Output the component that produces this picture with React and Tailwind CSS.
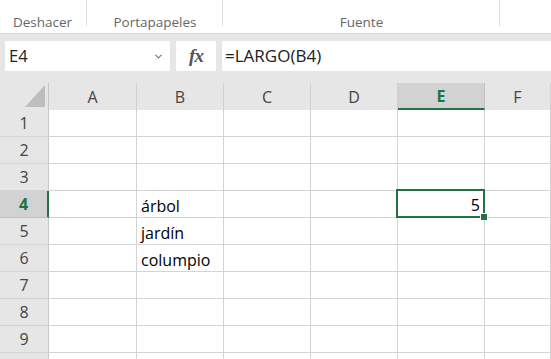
import { ChevronDown } from "lucide-react";

const cols = ["A", "B", "C", "D", "E", "F"];
const rows = [1, 2, 3, 4, 5, 6, 7, 8, 9, 10];

const data = {
  "B4": "árbol",
  "B5": "jardín",
  "B6": "columpio",
  "E4": "5",
};

const gridCols = "grid grid-cols-[49px_88px_87px_87px_87px_87px_1fr]";

const App = () => {
  return (
    <div className="w-[551px] h-[359px] overflow-hidden bg-white font-['Open_Sans',sans-serif] select-none">
      {/* Ribbon group labels */}
      <div className="h-[34px] flex border-b border-[#d6d6d6] bg-white">
        <div className="w-[87px] relative">
          <div className="h-[33px] flex items-end justify-center pb-[1px] pr-[2px] text-[13.5px] text-[#666]">Deshacer</div>
          <div className="absolute right-0 top-0 w-px h-[26px] bg-[#dcdcdc]" />
        </div>
        <div className="w-[136px] relative">
          <div className="h-[33px] flex items-end justify-center pb-[1px] text-[13.5px] text-[#666]">Portapapeles</div>
          <div className="absolute right-0 top-0 w-px h-[26px] bg-[#dcdcdc]" />
        </div>
        <div className="w-[277px] relative">
          <div className="h-[33px] flex items-end justify-center pb-[1px] text-[13.5px] text-[#666]">Fuente</div>
          <div className="absolute right-0 top-0 w-px h-[26px] bg-[#dcdcdc]" />
        </div>
        <div className="flex-1" />
      </div>

      {/* Formula bar */}
      <div className="h-[49px] bg-[#e6e6e6] pt-[7px] flex items-start">
        <div className="ml-[5px] w-[165px] h-[30px] bg-white flex items-center justify-between pl-[4px] pr-[6px]">
          <span className="text-[16.5px] text-[#222]">E4</span>
          <ChevronDown size={11} strokeWidth={2.5} className="text-[#777]" />
        </div>
        <div className="ml-[6px] w-[40px] h-[30px] bg-white flex items-center justify-center">
          <span className="font-['Liberation_Serif',serif] italic font-bold text-[19px] text-[#555] tracking-[-1px]">fx</span>
        </div>
        <div className="ml-[6px] flex-1 h-[30px] bg-white flex items-center pl-[3px]">
          <span className="text-[17px] text-[#222]">=LARGO(B4)</span>
        </div>
      </div>

      {/* Column headers */}
      <div className={`${gridCols} h-[27px] bg-[#e6e6e6]`}>
        <div className="relative border-r border-[#c8c8c8] flex items-end justify-end pr-[3px] pb-[3px]">
          <div className="w-[20px] h-[22px] bg-[#bdbdbd] [clip-path:polygon(100%_0,100%_100%,0_100%)]" />
        </div>
        {cols.map((c) =>
          c === "E" ? (
            <div key={c} className="bg-[#d2d2d2] border-r border-[#c2c2c2] border-b-2 border-b-[#217346] flex items-center justify-center text-[16px] font-bold text-[#217346]">
              {c}
            </div>
          ) : (
            <div key={c} className="border-r border-[#d0d0d0] flex items-center justify-center text-[16px] text-[#444]">
              {c}
            </div>
          )
        )}
      </div>

      {/* Rows */}
      {rows.map((r) => (
        <div key={r} className={`${gridCols} h-[27px]`}>
          {r === 4 ? (
            <div className="bg-[#d2d2d2] border-r-2 border-r-[#217346] border-b border-[#c2c2c2] flex items-center justify-center text-[16px] font-bold text-[#217346]">
              {r}
            </div>
          ) : (
            <div className="bg-[#e6e6e6] border-r border-[#c8c8c8] border-b border-b-[#d4d4d4] flex items-center justify-center text-[16px] text-[#444]">
              {r < 10 ? r : ""}
            </div>
          )}
          {cols.map((c) => {
            const key = `${c}${r}`;
            const val = data[key];
            if (key === "E4") {
              return (
                <div key={key} className="relative border-r border-b border-[#d4d4d4]">
                  <div className="absolute -left-[2px] -top-[2px] w-[89px] h-[29px] border-2 border-[#217346] flex items-end justify-end pr-[3px] text-[16px] leading-[21px] text-black">
                    {val}
                  </div>
                  <div className="absolute -right-[4px] -bottom-[4px] w-[6px] h-[6px] bg-[#217346] border border-white box-content" />
                </div>
              );
            }
            return (
              <div key={key} className="border-r border-b border-[#d4d4d4] flex items-end pl-[4px] text-[16px] leading-[21px] text-black">
                {val}
              </div>
            );
          })}
        </div>
      ))}
    </div>
  );
};

export default App;
